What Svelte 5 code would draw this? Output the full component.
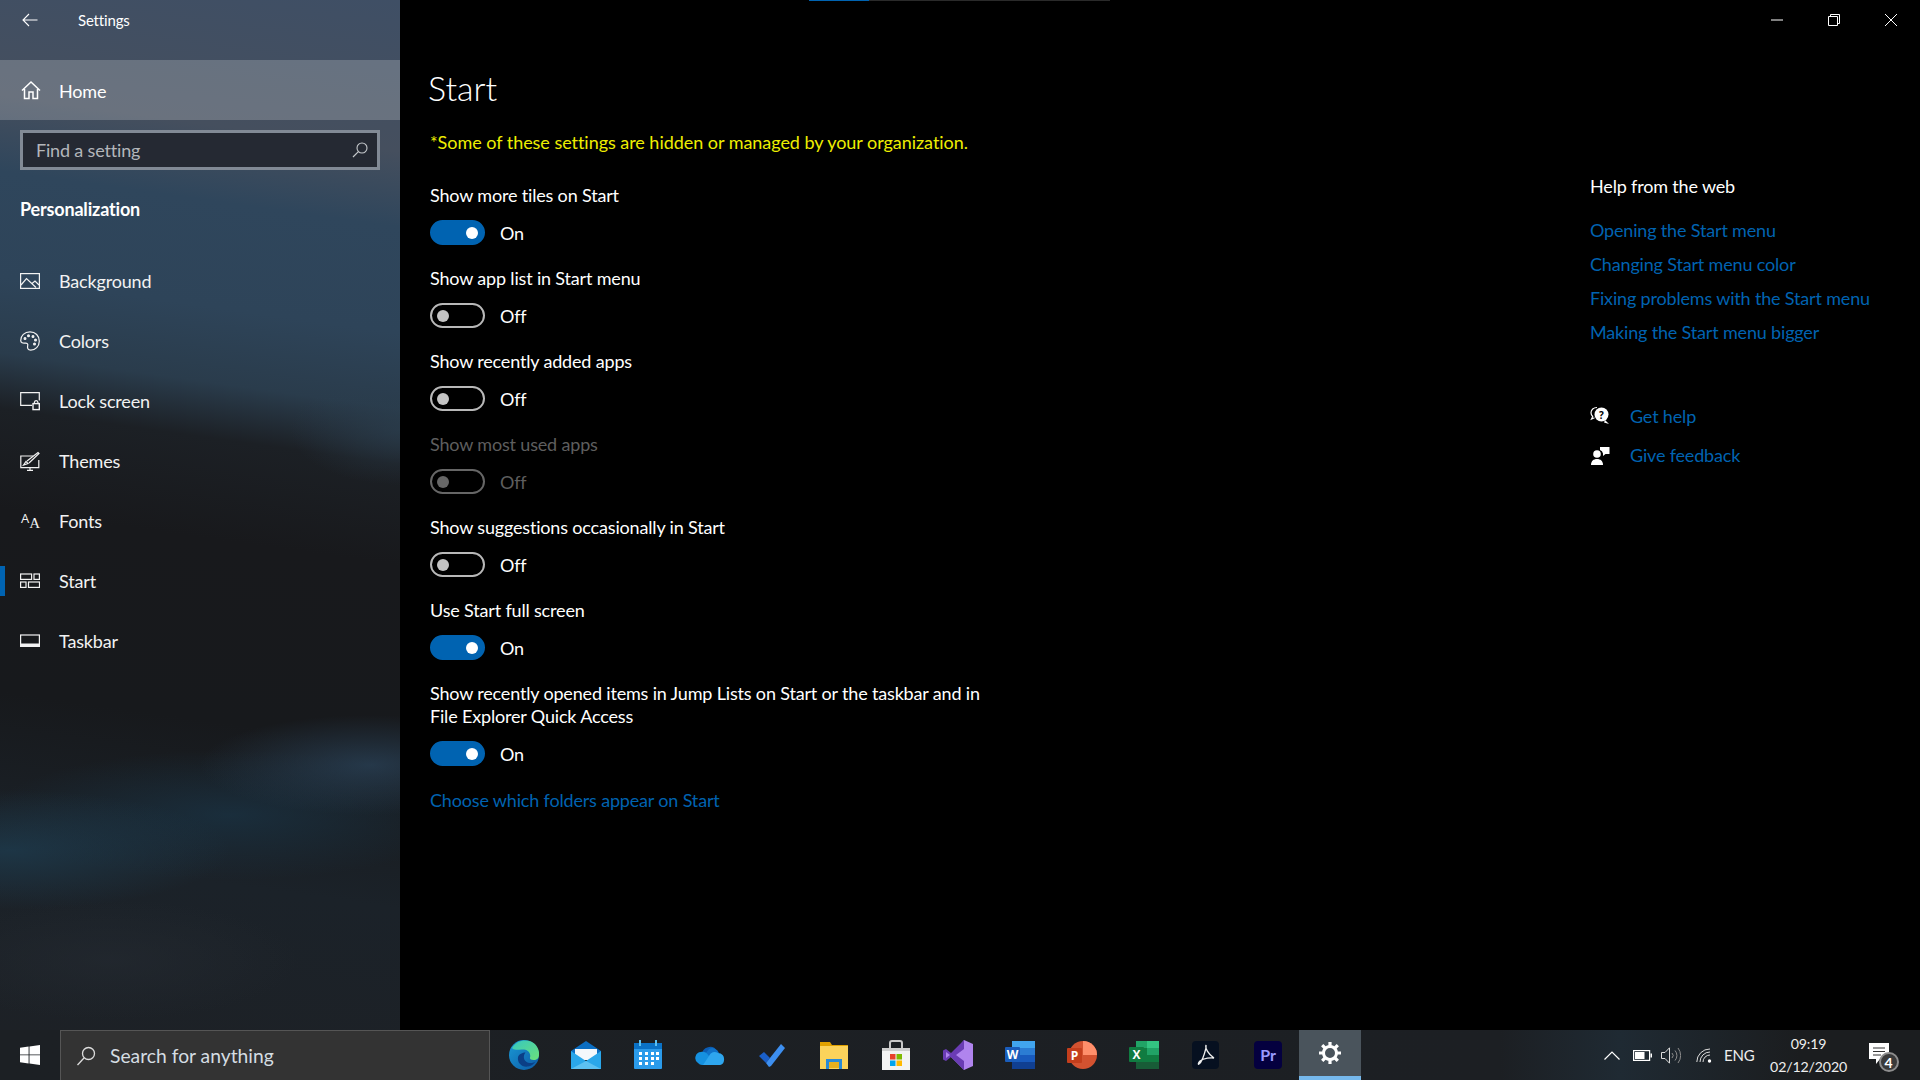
<script>
  const navItems = [
    { label: 'Background', icon: 'background' },
    { label: 'Colors', icon: 'colors' },
    { label: 'Lock screen', icon: 'lock' },
    { label: 'Themes', icon: 'themes' },
    { label: 'Fonts', icon: 'fonts' },
    { label: 'Start', icon: 'start', active: true },
    { label: 'Taskbar', icon: 'taskbar' }
  ];

  const settings = [
    { label: 'Show more tiles on Start', on: true },
    { label: 'Show app list in Start menu', on: false },
    { label: 'Show recently added apps', on: false },
    { label: 'Show most used apps', on: false, disabled: true },
    { label: 'Show suggestions occasionally in Start', on: false },
    { label: 'Use Start full screen', on: true },
    { label: 'Show recently opened items in Jump Lists on Start or the taskbar and in File Explorer Quick Access', on: true }
  ];

  const helpLinks = [
    'Opening the Start menu',
    'Changing Start menu color',
    'Fixing problems with the Start menu',
    'Making the Start menu bigger'
  ];
</script>

<div class="screen">
  <div class="window">
    <aside class="sidebar">
      <div class="side-head">
        <svg class="back" viewBox="0 0 16 14" width="16" height="14"><path d="M15.5 7H1M7 1 1 7l6 6" fill="none" stroke="#fff" stroke-width="1.1"/></svg>
        <span class="side-title">Settings</span>
      </div>
      <div class="home">
        <svg viewBox="0 0 20 20" width="20" height="20"><path d="M1 10.5 10 2l9 8.500M3.500 9v9.500h4.500v-6.500h4v6.500h4.500V9" fill="none" stroke="#fff" stroke-width="1.500"/></svg>
        <span>Home</span>
      </div>
      <div class="find">
        <span>Find a setting</span>
        <svg viewBox="0 0 16 16" width="16" height="16"><circle cx="10" cy="6" r="5" fill="none" stroke="#c5c8cc" stroke-width="1.100"/><path d="M6.400 9.600 1 15" stroke="#c5c8cc" stroke-width="1.200"/></svg>
      </div>
      <h2 class="group">Personalization</h2>
      <nav class="nav">
        {#each navItems as item}
          <div class="nav-item" class:active={item.active}>
            {#if item.icon === 'fonts'}
              <span class="fonts-icon"><span class="a-small">A</span><span class="a-big">A</span></span>
            {:else}
              <svg class="nav-icon" viewBox="0 0 20 20" width="20" height="20" fill="none" stroke="#f2f2f2" stroke-width="1.200">
                {#if item.icon === 'background'}
                  <rect x=".6" y="2.600" width="18.800" height="14.800"/>
                  <path d="M1 14 6.500 7.500 16 16.500M12 12.500l3-2.500 4 4"/>
                {:else if item.icon === 'colors'}
                  <path d="M10 .8C4.500.8.700 4.800.700 9.400c0 2.400 2.300 3 4.300 2.700 2-.3 3.300.8 2.700 2.700-.6 2 .1 4.400 3 4.400 4.500 0 8.600-3.900 8.600-9C19.300 4.800 15.500.8 10 .8z"/>
                  <circle cx="5" cy="7.500" r=".9" fill="#f2f2f2"/><circle cx="8.500" cy="4.800" r=".9" fill="#f2f2f2"/><circle cx="13" cy="5.500" r=".9" fill="#f2f2f2"/><circle cx="15.500" cy="9" r=".9" fill="#f2f2f2"/><circle cx="14.500" cy="13" r=".9" fill="#f2f2f2"/>
                {:else if item.icon === 'lock'}
                  <path d="M12 14.400H.7V1.600h18.600v8"/>
                  <rect x="13" y="12.600" width="6.300" height="6" stroke-width="1.400"/>
                  <path d="M14.400 12.600v-1.500a1.800 1.800 0 0 1 3.500 0v1.500"/>
                {:else if item.icon === 'themes'}
                  <path d="M13 5H.8v11.600h18V9"/>
                  <path d="M7 19.400h6M10 16.800v2.600M3.500 14 6 10.500l2 2zM7 10 18 1.500 19 2.500 9 12"/>
                {:else if item.icon === 'start'}
                  <rect x=".6" y="3" width="11" height="5.400"/><rect x="14" y="3" width="5.400" height="5.400"/>
                  <rect x=".6" y="11" width="5.400" height="5.400"/><rect x="8.500" y="11" width="11" height="5.400"/>
                {:else}
                  <rect x=".6" y="4" width="18.800" height="11.400"/>
                  <rect x="1" y="12.500" width="18" height="3" fill="#f2f2f2" stroke="none"/>
                {/if}
              </svg>
            {/if}
            <span>{item.label}</span>
          </div>
        {/each}
      </nav>
    </aside>

    <main class="content">
      <div class="scroll-strip"><i></i></div>
      <div class="titlebar">
        <div class="win-btn"><svg viewBox="0 0 12 12" width="12" height="12"><path d="M0 6h12" stroke="#fff" stroke-width="1"/></svg></div>
        <div class="win-btn"><svg viewBox="0 0 12 12" width="12" height="12"><path d="M.5 2.500h9v9h-9zM2.500 2.500V.5h9v9h-2" fill="none" stroke="#fff" stroke-width="1"/></svg></div>
        <div class="win-btn"><svg viewBox="0 0 12 12" width="12" height="12"><path d="M0 0l12 12M12 0 0 12" stroke="#fff" stroke-width="1"/></svg></div>
      </div>

      <div class="body">
        <section class="main-col">
          <h1>Start</h1>
          <p class="notice">*Some of these settings are hidden or managed by your organization.</p>
          {#each settings as s}
            <div class="setting" class:disabled={s.disabled}>
              <div class="setting-label">{s.label}</div>
              <div class="toggle-row">
                <span class="toggle" class:on={s.on}><i></i></span>
                <span>{s.on ? 'On' : 'Off'}</span>
              </div>
            </div>
          {/each}
          <a class="link" href="#folders">Choose which folders appear on Start</a>
        </section>

        <section class="help-col">
          <h3>Help from the web</h3>
          {#each helpLinks as l}
            <a class="link help-link" href="#help">{l}</a>
          {/each}
          <div class="help-actions">
            <div class="action">
              <svg viewBox="0 0 20 20" width="20" height="20">
                <path d="M7 1.500C3.500 1.500 1 3.800 1 6.800c0 1.500.6 2.700 1.700 3.700L1.500 13l3-1.300" fill="none" stroke="#fff" stroke-width="1.200"/>
                <circle cx="11.500" cy="8.500" r="7" fill="#fff"/>
                <path d="M15 14l4 4-5-1.500z" fill="#fff"/>
                <text x="9" y="12.500" class="q">?</text>
              </svg>
              <a class="link" href="#get">Get help</a>
            </div>
            <div class="action">
              <svg viewBox="0 0 20 20" width="20" height="20">
                <circle cx="7" cy="9" r="3.800" fill="#fff"/>
                <path d="M1 20c0-4 2.500-6 6-6s6 2 6 6z" fill="#fff"/>
                <path d="M10 2h9.500v7h-4l-2.500 2V8.500A5 5 0 0 0 10 5z" fill="#fff"/>
              </svg>
              <a class="link" href="#feedback">Give feedback</a>
            </div>
          </div>
        </section>
      </div>
    </main>
  </div>

  <footer class="taskbar">
    <div class="start-btn">
      <svg viewBox="0 0 20 20" width="20" height="20" fill="#fff"><path d="M0 2.800 8.600 1.600v7.800H0zM9.500 1.500 20 0v9.400H9.500zM0 10.300h8.600v8.100L0 17.200zM9.500 10.300H20V20L9.500 18.500z"/></svg>
    </div>
    <div class="search">
      <svg viewBox="0 0 20 20" width="20" height="20"><circle cx="12.500" cy="7.500" r="6" fill="none" stroke="#ddd" stroke-width="1.300"/><path d="M8 12 1.500 19" stroke="#ddd" stroke-width="1.300"/></svg>
      <span>Search for anything</span>
    </div>
    <div class="apps">
      <div class="app">
        <!-- edge -->
        <svg viewBox="0 0 30 30" width="30" height="30">
          <defs>
            <linearGradient id="edgeA" x1="0" y1="0" x2="1" y2="1"><stop offset="0" stop-color="#1a9ad6"/><stop offset="1" stop-color="#0c59a4"/></linearGradient>
            <linearGradient id="edgeB" x1="0" y1="0" x2="1" y2="1"><stop offset="0" stop-color="#36c7c0"/><stop offset="1" stop-color="#6ce07a"/></linearGradient>
          </defs>
          <circle cx="15" cy="15" r="15" fill="url(#edgeA)"/>
          <path d="M3 8C7 1 15-1 22 1.500 28 4 30.500 10 30 15c0 3-2 5-5.500 5-2.500 0-4-1-3.500-2.500 1-3-1-7.500-6-8C9 9 5 11 3 8z" fill="url(#edgeB)"/>
          <path d="M9 17c-1 6 4 10.500 10 9.500 3-.5 5.500-2 7.500-5-3 2-7 2-9.500 0-3-2-2.500-7-.5-9-3 0-6.500 1.500-7.500 4.500z" fill="#0b3f86"/>
        </svg>
      </div>
      <div class="app">
        <!-- mail -->
        <svg viewBox="0 0 30 30" width="30" height="30">
          <path d="M0 11 15 1l15 10v8H0z" fill="#0b6ec2"/>
          <path d="M4 9h22v11H4z" fill="#f4f8fb"/>
          <path d="M0 11l15 10 15-10v18H0z" fill="#2aa7ea"/>
          <path d="M0 29l15-8 15 8z" fill="#5cc1f2"/>
        </svg>
      </div>
      <div class="app">
        <!-- calendar -->
        <svg viewBox="0 0 30 30" width="30" height="30">
          <rect x="1" y="3" width="28" height="26" rx="1" fill="#2b9bea"/>
          <rect x="1" y="3" width="28" height="6" fill="#0a72c6"/>
          <rect x="6" y="0" width="2" height="6" fill="#5cc1f2"/><rect x="22" y="0" width="2" height="6" fill="#5cc1f2"/>
          <path d="M6 12h3v3H6zm6 0h3v3h-3zm6 0h3v3h-3zm5 0h3v3h-3zM6 17h3v3H6zm6 0h3v3h-3zm6 0h3v3h-3zm5 0h3v3h-3zM6 22h3v3H6zm6 0h3v3h-3zm6 0h3v3h-3z" fill="#fff"/>
        </svg>
      </div>
      <div class="app">
        <!-- onedrive -->
        <svg viewBox="0 0 30 30" width="30" height="30">
          <path d="M7 15a8 8 0 0 1 15-4l-7 9z" fill="#0b5cb3"/>
          <path d="M14 9a7 7 0 0 1 10 4l-9 7-5-6z" fill="#0f72c9"/>
          <path d="M3 23a6 6 0 0 1 3-11c5-1 7 3 8 4l9 9H7a6 6 0 0 1-4-2z" fill="#1591e0"/>
          <path d="M14 16a6 6 0 0 1 9-3 6 6 0 0 1 6 7c0 3-2 5-5 5H8z" fill="#2ea6ee"/>
        </svg>
      </div>
      <div class="app">
        <!-- todo -->
        <svg viewBox="0 0 30 30" width="30" height="30">
          <path d="M2 16l5-4 6 6-4 5z" fill="#1a5fc8"/>
          <path d="M9 23 24 4l4 4-14 18-2 1z" fill="#3d8ff0"/>
        </svg>
      </div>
      <div class="app">
        <!-- explorer -->
        <svg viewBox="0 0 30 30" width="30" height="30">
          <path d="M1 2h10l2 3h16v24H1z" fill="#e0a100"/>
          <rect x="1" y="6" width="28" height="23" fill="#fbd35b"/>
          <path d="M7 29v-10h16v10h-3v-5h-10v5z" fill="#2a8bd6"/>
          <rect x="10" y="22" width="10" height="6" fill="#e8b01e"/>
        </svg>
      </div>
      <div class="app">
        <!-- store -->
        <svg viewBox="0 0 30 30" width="30" height="30">
          <path d="M9 8V3a2 2 0 0 1 2-2h8a2 2 0 0 1 2 2v5" fill="none" stroke="#c8c8c8" stroke-width="2"/>
          <rect x="1" y="8" width="28" height="22" fill="#f3f3f3"/>
          <rect x="1" y="8" width="28" height="3" fill="#cfcfcf"/>
          <rect x="9" y="14" width="5.500" height="5.500" fill="#e8412c"/><rect x="15.500" y="14" width="5.500" height="5.500" fill="#7fba00"/>
          <rect x="9" y="20.500" width="5.500" height="5.500" fill="#00a4ef"/><rect x="15.500" y="20.500" width="5.500" height="5.500" fill="#ffb900"/>
        </svg>
      </div>
      <div class="app">
        <!-- visual studio -->
        <svg viewBox="0 0 30 30" width="30" height="30">
          <path d="M21 0 30 4v22l-9 4L8 17l13-17z" fill="#b084ee"/>
          <path d="M21 0 8 13 3 9 0 10.500v9L3 21l5-4 13 13V21l-8-6 8-6z" fill="#6a3cb4"/>
          <path d="M3 12l4 3-4 3z" fill="#b084ee"/>
        </svg>
      </div>
      <div class="app">
        <!-- word -->
        <svg viewBox="0 0 30 30" width="30" height="30">
          <rect x="7" y="1" width="23" height="7" fill="#41a5ee"/>
          <rect x="7" y="8" width="23" height="7" fill="#2b7cd3"/>
          <rect x="7" y="15" width="23" height="7" fill="#185abd"/>
          <rect x="7" y="22" width="23" height="7" fill="#103f91"/>
          <rect x="0" y="7" width="15" height="15" rx="1" fill="#1a5dbb"/>
          <text x="7.500" y="19" class="appl">W</text>
        </svg>
      </div>
      <div class="app">
        <!-- powerpoint -->
        <svg viewBox="0 0 30 30" width="30" height="30">
          <circle cx="16" cy="15" r="14" fill="#d35230"/>
          <path d="M16 1a14 14 0 0 1 14 14H16z" fill="#ff8f6b"/>
          <rect x="0" y="8" width="15" height="15" rx="1" fill="#c43e1c"/>
          <text x="7.500" y="20" class="appl">P</text>
        </svg>
      </div>
      <div class="app">
        <!-- excel -->
        <svg viewBox="0 0 30 30" width="30" height="30">
          <rect x="7" y="1" width="11" height="7" fill="#21a366"/><rect x="18" y="1" width="12" height="7" fill="#33c481"/>
          <rect x="7" y="8" width="11" height="14" fill="#107c41"/><rect x="18" y="8" width="12" height="7" fill="#21a366"/>
          <rect x="18" y="15" width="12" height="7" fill="#107c41"/><rect x="7" y="22" width="23" height="7" fill="#185c37"/>
          <rect x="0" y="7" width="15" height="15" rx="1" fill="#107c41"/>
          <text x="7.500" y="19" class="appl">X</text>
        </svg>
      </div>
      <div class="app">
        <!-- acrobat -->
        <svg viewBox="0 0 28 30" width="28" height="30">
          <rect width="27" height="28" y="1" rx="4" fill="#061020"/>
          <path d="M14 5c-1 3 2 9 8 13 -3-.5-10 0-14 3-2 2-2 4-1 3 3-2 6-12 7-16 0-2 0-3 0-3z" fill="none" stroke="#f0f0f0" stroke-width="1.300"/>
        </svg>
      </div>
      <div class="app">
        <!-- premiere -->
        <svg viewBox="0 0 28 30" width="28" height="30">
          <rect width="28" height="28" y="1" rx="4" fill="#04003f"/>
          <text x="14" y="20.500" class="pr">Pr</text>
        </svg>
      </div>
      <div class="app current">
        <svg viewBox="0 0 24 24" width="24" height="24">
          <g fill="none" stroke="#fff">
            <circle cx="12" cy="12" r="6.500" stroke-width="3"/>
            <path stroke-width="3.200" d="M12 1v4M12 19v4M1 12h4M19 12h4M4.200 4.200 7 7M17 17l2.800 2.800M19.800 4.200 17 7M7 17l-2.800 2.800"/>
          </g>
        </svg>
      </div>
    </div>

    <div class="tray">
      <svg class="tray-chev" viewBox="0 0 16 9" width="16" height="9"><path d="M.5 8.500 8 1l7.500 7.500" fill="none" stroke="#fff" stroke-width="1.200"/></svg>
      <svg class="tray-batt" viewBox="0 0 19 11" width="19" height="11"><rect x=".6" y=".6" width="16" height="9.800" fill="none" stroke="#fff" stroke-width="1.200"/><rect x="2" y="2" width="9.500" height="7" fill="#fff"/><rect x="17.500" y="3.500" width="1.500" height="4" fill="#fff"/></svg>
      <svg class="tray-vol" viewBox="0 0 20 17" width="20" height="17" fill="none" stroke="#ddd" stroke-width="1"><path d="M.5 5.500h3.500L8.500.8v15.400L4 11.500H.5z"/><path d="M11 6a3.500 3.500 0 0 1 0 5M14 3.500a7.500 7.500 0 0 1 0 10M17 1a12 12 0 0 1 0 15" stroke="#8d8d8d"/></svg>
      <svg class="tray-wifi" viewBox="0 0 16 15" width="16" height="15" fill="none" stroke="#ddd" stroke-width="1"><path d="M.8 14A13 13 0 0 1 14 1M4 14a10 10 0 0 1 10-10M7 14a7 7 0 0 1 7-7"/><circle cx="13.500" cy="13" r="1.700" fill="#fff" stroke="none"/></svg>
      <span class="lang">ENG</span>
      <div class="clock"><span>09:19</span><span>02/12/2020</span></div>
      <div class="notif">
        <svg viewBox="0 0 20 24" width="20" height="24"><path d="M0 0h20v16h-9l-4 5v-5H0z" fill="#fff"/><path d="M4 5h12M4 8.500h12M4 12h8" stroke="#333" stroke-width="1.100"/></svg>
        <span class="badge">4</span>
      </div>
    </div>
  </footer>
</div>

<style>
  :global(body) {
    background: #000;
  }
  .screen {
    width: 1920px;
    height: 1080px;
    display: flex;
    flex-direction: column;
    overflow: hidden;
    font-family: Lato, "Open Sans", sans-serif;
    font-size: 18px;
    letter-spacing: -0.17px;
    color: #fff;
  }
  .window {
    flex: 1;
    display: flex;
    min-height: 0;
  }
  .sidebar {
    width: 400px;
    flex-shrink: 0;
    display: flex;
    flex-direction: column;
    background:
      radial-gradient(ellipse 170px 50px at 370px 765px, rgba(42, 66, 88, 0.75), transparent),
      radial-gradient(ellipse 220px 60px at 10px 850px, rgba(30, 62, 82, 0.7), transparent),
      radial-gradient(ellipse 240px 65px at 230px 815px, rgba(26, 52, 70, 0.7), transparent),
      radial-gradient(ellipse 110px 55px at 400px 430px, rgba(43, 62, 78, 0.65), transparent),
      radial-gradient(ellipse 190px 60px at 110px 960px, rgba(35, 41, 48, 0.7), transparent),
      linear-gradient(188deg, #3f4f65 0, #454f5e 150px, #2f465c 225px, #2e4459 330px, #2a3c4c 405px, #1c2025 460px, #18191c 560px, #17191c 740px, #1b2229 900px, #1d2126 1076px);
  }
  .side-head {
    height: 60px;
    padding: 0 0 20px 22px;
    box-sizing: border-box;
    display: flex;
    align-items: center;
  }
  .side-title {
    margin-left: 40px;
    font-size: 15px;
  }
  .home {
    height: 60px;
    display: flex;
    align-items: center;
    padding-left: 21px;
    gap: 18px;
    background: rgba(255, 255, 255, 0.2);
  }
  .home span {
    position: relative;
    top: 1px;
  }
  .find {
    margin: 10px 20px 0;
    height: 40px;
    box-sizing: border-box;
    border: 3px solid #828a96;
    background: #252933;
    display: flex;
    align-items: center;
    justify-content: space-between;
    padding: 0 9px 0 13px;
    color: #b3b6bb;
  }
  .group {
    margin: 26px 0 0 20px;
    font-size: 18px;
    font-weight: 700;
    line-height: 26px;
  }
  .nav {
    margin-top: 29px;
    display: flex;
    flex-direction: column;
  }
  .nav-item {
    height: 60px;
    box-sizing: border-box;
    display: flex;
    align-items: center;
    padding-left: 20px;
    gap: 19px;
    position: relative;
    color: #f2f2f2;
  }
  .nav-item.active::before {
    content: '';
    position: absolute;
    left: 0;
    top: 15px;
    bottom: 15px;
    width: 5px;
    background: #0063b1;
  }
  .fonts-icon {
    width: 20px;
    height: 20px;
    display: flex;
    align-items: flex-end;
    line-height: 1;
    letter-spacing: 0;
  }
  .a-small {
    font-size: 13px;
    margin: 0 0 6px 1px;
    font-family: "Open Sans", sans-serif;
  }
  .a-big {
    font-size: 15px;
    font-family: "Liberation Serif", serif;
  }
  .content {
    flex: 1;
    background: #000;
    position: relative;
    display: flex;
    flex-direction: column;
  }
  .scroll-strip {
    position: absolute;
    left: 409px;
    top: 0;
    width: 301px;
    height: 1px;
    background: #2a2a2a;
  }
  .scroll-strip i {
    display: block;
    width: 60px;
    height: 1px;
    background: #0063b1;
  }
  .titlebar {
    height: 40px;
    display: flex;
    justify-content: flex-end;
    padding-right: 1px;
  }
  .win-btn {
    width: 57px;
    display: flex;
    align-items: center;
    justify-content: center;
  }
  .body {
    flex: 1;
    display: flex;
    justify-content: space-between;
  }
  .main-col {
    width: 600px;
    padding-left: 30px;
  }
  h1 {
    margin: 23px 0 0 -2px;
    font-size: 34px;
    font-weight: 300;
    line-height: 50px;
    letter-spacing: 0;
  }
  .notice {
    margin: 17px 0 30px;
    color: #eeee00;
    line-height: 24px;
    letter-spacing: -0.04px;
  }
  .setting {
    padding-bottom: 22px;
  }
  .setting-label {
    line-height: 23px;
    width: 570px;
    margin-bottom: 13px;
  }
  .toggle-row {
    height: 25px;
    display: flex;
    align-items: center;
    gap: 15px;
  }
  .toggle {
    width: 55px;
    height: 25px;
    box-sizing: border-box;
    border-radius: 13px;
    border: 2px solid #b8b8b8;
    position: relative;
    display: block;
  }
  .toggle i {
    position: absolute;
    left: 5px;
    top: 4.500px;
    width: 12px;
    height: 12px;
    border-radius: 50%;
    background: #c4c4c4;
  }
  .toggle.on {
    background: #0063b1;
    border-color: #0063b1;
  }
  .toggle.on i {
    left: 34px;
    background: #fff;
  }
  .disabled {
    color: #5e5e5e;
  }
  .disabled .toggle {
    border-color: #666;
  }
  .disabled .toggle i {
    background: #666;
  }
  .link {
    color: #0063b1;
    text-decoration: none;
    display: block;
    line-height: 24px;
  }
  .help-col {
    width: 330px;
    padding-top: 134px;
  }
  h3 {
    margin: 0 0 20px;
    font-size: 18px;
    font-weight: 400;
    line-height: 24px;
  }
  .help-link {
    margin-bottom: 10px;
  }
  .help-actions {
    margin-top: 60px;
    display: flex;
    flex-direction: column;
    gap: 15px;
  }
  .action {
    display: flex;
    align-items: center;
    gap: 20px;
  }
  .q {
    font-size: 10px;
    font-weight: 700;
    fill: #000;
    font-family: "Open Sans", sans-serif;
  }
  .taskbar {
    height: 50px;
    flex-shrink: 0;
    display: flex;
    background: linear-gradient(90deg, #1c2024 0, #1c1f23 1500px, #1f2a33 1620px, #1b1d1f 1800px);
  }
  .start-btn {
    width: 60px;
    display: flex;
    align-items: center;
    justify-content: center;
  }
  .search {
    width: 430px;
    box-sizing: border-box;
    background: #333;
    border: 1px solid #555;
    border-bottom: none;
    display: flex;
    align-items: center;
    padding-left: 15px;
    gap: 14px;
    color: #d5dde2;
    font-size: 19.300px;
    letter-spacing: 0;
  }
  .apps {
    display: flex;
    margin-left: 3px;
  }
  .app {
    width: 62px;
    display: flex;
    align-items: center;
    justify-content: center;
  }
  .app.current {
    background: #4a545c;
    border-bottom: 4px solid #76b9ed;
    box-sizing: border-box;
  }
  .appl {
    font-size: 12px;
    font-weight: 700;
    fill: #fff;
    text-anchor: middle;
    font-family: "Open Sans", sans-serif;
  }
  .pr {
    font-size: 16px;
    font-weight: 700;
    fill: #9999ff;
    text-anchor: middle;
    font-family: Lato, sans-serif;
  }
  .tray {
    flex: 1;
    display: flex;
    align-items: center;
    padding-left: 243px;
    box-sizing: border-box;
  }
  .tray-chev {
    margin-right: 13px;
  }
  .tray-batt {
    margin-right: 9px;
  }
  .tray-vol {
    margin-right: 15px;
  }
  .tray-wifi {
    margin-right: 12px;
  }
  .lang {
    font-size: 15px;
    margin-right: 16px;
    color: #eee;
  }
  .clock {
    width: 76px;
    display: flex;
    flex-direction: column;
    align-items: center;
    gap: 3px;
    font-size: 14.200px;
    line-height: 20px;
    color: #eee;
  }
  .notif {
    position: relative;
    margin-left: 22px;
    height: 24px;
  }
  .badge {
    position: absolute;
    left: 10px;
    top: 9px;
    width: 20px;
    height: 20px;
    border: 2px solid #8d8d8d;
    border-radius: 50%;
    background: #3a3a3a;
    font-size: 14px;
    font-weight: 700;
    display: flex;
    align-items: center;
    justify-content: center;
    box-sizing: border-box;
  }
</style>
